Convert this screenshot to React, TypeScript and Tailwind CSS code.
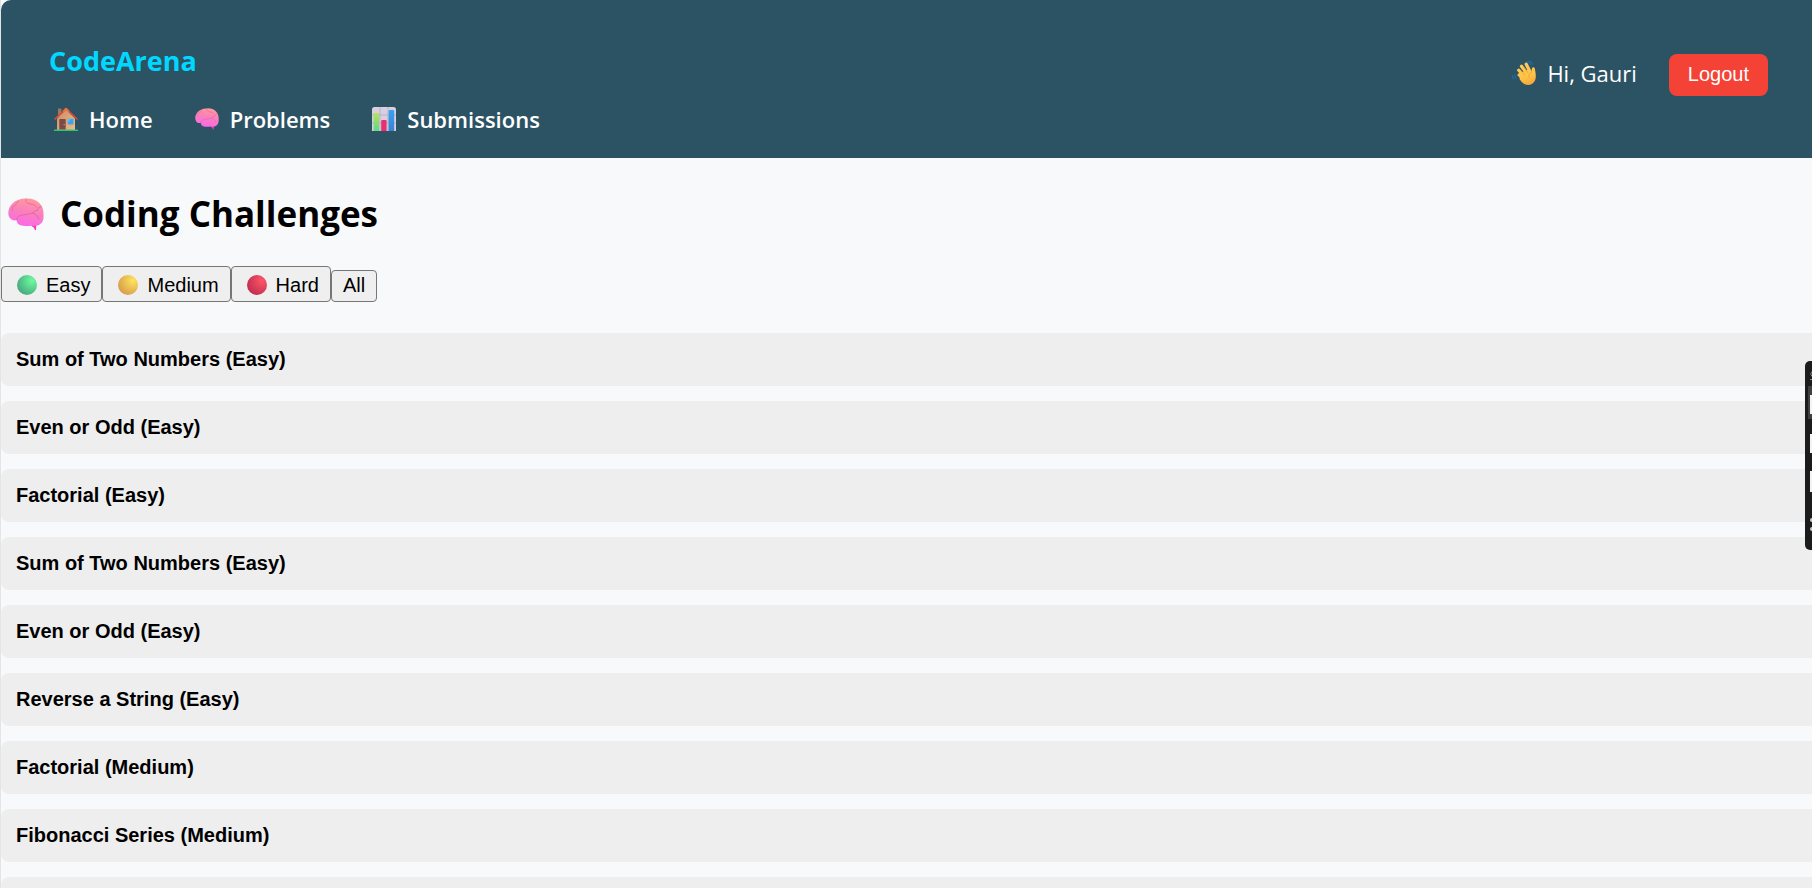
import { useState } from "react";

type Level = "Easy" | "Medium" | "Hard";

const problems: { title: string; level: Level }[] = [
  { title: "Sum of Two Numbers", level: "Easy" },
  { title: "Even or Odd", level: "Easy" },
  { title: "Factorial", level: "Easy" },
  { title: "Sum of Two Numbers", level: "Easy" },
  { title: "Even or Odd", level: "Easy" },
  { title: "Reverse a String", level: "Easy" },
  { title: "Factorial", level: "Medium" },
  { title: "Fibonacci Series", level: "Medium" },
];

function HouseIcon() {
  return (
    <svg viewBox="0 0 24 24" className="size-6 shrink-0" aria-hidden="true">
      <defs>
        <linearGradient id="wall" x1="0" x2="1" y1="0" y2="1">
          <stop offset="0" stopColor="#c98a62" />
          <stop offset="1" stopColor="#efbd8c" />
        </linearGradient>
      </defs>
      <path d="M4 1.6h3.4v8H4z" fill="#a5765c" />
      <path d="M3 11.5 12 2.5l9 9V23H3z" fill="url(#wall)" />
      <path d="M1 12 12 1.6 23 12" fill="none" stroke="#dd4a38" strokeWidth="1.6" strokeLinecap="round" strokeLinejoin="round" />
      <path d="M9.5 4 12 1.6 14.5 4" fill="none" stroke="#f2733c" strokeWidth="1.6" strokeLinecap="round" strokeLinejoin="round" />
      <rect x="5.3" y="12" width="6.4" height="10.8" rx="0.8" fill="#7d4b47" />
      <circle cx="10.2" cy="17.6" r="0.7" fill="#d9a27c" />
      <rect x="13.8" y="11.8" width="5.6" height="5.8" rx="0.6" fill="#3aa4ee" />
      <path d="M13.8 12.4q0-.6.6-.6h2.6l-3.2 4z" fill="#5cc0fa" />
      <path d="M.6 23.2h22.8" stroke="#35c46c" strokeWidth="1.4" strokeLinecap="round" />
    </svg>
  );
}

function BrainIcon({ id, className }: { id: string; className: string }) {
  return (
    <svg viewBox="0 0 36 33" className={className} aria-hidden="true">
      <defs>
        <linearGradient id={id} x1="0.65" x2="0.4" y1="0" y2="1">
          <stop offset="0" stopColor="#ff9a9c" />
          <stop offset="0.5" stopColor="#f97fbd" />
          <stop offset="1" stopColor="#fc68e8" />
        </linearGradient>
      </defs>
      <path d="M24 26.5h4.3l-.2 5.1q-.2 1.2-1.1.4-.8-2.8-3.6-4z" fill="#ea42bb" />
      <path
        d="M17.5.6C23 .1 28.5 1.7 31.5 5.3c3 3.1 4.1 6.5 4 10.6.4 4.5-.3 8.8-3.8 10.7-2.6 1.9-5.7 1.1-8.2 1.1-3.9.6-8.1.6-11.1-.4-2.2-.7-3.6-2.4-3.7-5.2-2.4.8-5.2.2-6.8-2C-.1 17.5.1 14 .9 11.3 2.2 7.4 5.5 3.9 9 2.6 11.7 1.2 14.5.5 17.5.6Z"
        fill={`url(#${id})`}
      />
      <g fill="none" stroke="#e0559f" strokeWidth="1" strokeLinecap="round" opacity="0.6">
        <path d="M8.7 22.1c-.1-2 1.2-3.7 3-4.3 4.4-1.5 8.3-.8 12-2.6 2-.9 3.3-2.7 5.6-2.8" />
        <path d="M10 3.1c-.3 2.3-1.8 3-3.8 4.3-1.6 1.2-2.3 3.1-1.8 5.2M18 1.2c-.8 2.3.8 4.1 3.7 4.4M22 6c3.3 0 5.5 1.2 6.7 3.4M24.4 15.1c3 .5 5.4 2.6 6.3 5.8M33.4 8.7c-2.1.2-3.5 1.5-4 3.7" />
      </g>
    </svg>
  );
}

function ChartIcon() {
  return (
    <svg viewBox="0 0 24 24" className="size-6 shrink-0" aria-hidden="true">
      <defs>
        <linearGradient id="greenBar" x1="0" x2="0" y1="0" y2="1">
          <stop offset="0" stopColor="#b7e352" />
          <stop offset="1" stopColor="#5cdb86" />
        </linearGradient>
        <linearGradient id="blueBar" x1="0" x2="0" y1="0" y2="1">
          <stop offset="0" stopColor="#35a4f2" />
          <stop offset="1" stopColor="#3d7fd3" />
        </linearGradient>
      </defs>
      <path d="M0 2.5Q0 0 2.5 0h19Q24 0 24 2.5V24H0z" fill="#d8d0e0" />
      <path d="M8 0v24M16 0v24M0 8h24M0 16h24" stroke="#b3a9c0" strokeWidth="0.8" />
      <path d="M1.6 24V7q0-1 1-1H6q1 0 1 1v17z" fill="url(#greenBar)" />
      <path d="M9.2 24V14q0-1 1-1h3.4q1 0 1 1v10z" fill="#e8306f" />
      <path d="M16.6 24V4q0-1 1-1h3.6q1 0 1 1v20z" fill="url(#blueBar)" />
    </svg>
  );
}

function WaveIcon() {
  return (
    <svg viewBox="0 0 26 26" className="size-[26px] shrink-0" aria-hidden="true">
      <defs>
        <linearGradient id="hand" gradientUnits="userSpaceOnUse" x1="10" x2="18" y1="4" y2="25">
          <stop offset="0" stopColor="#ffc85c" />
          <stop offset="0.6" stopColor="#ffc446" />
          <stop offset="1" stopColor="#f5a43a" />
        </linearGradient>
      </defs>
      <g fill="none" stroke="#1f72b8" strokeWidth="1" strokeLinecap="round">
        <path d="M15.5 2q3.2-.4 4.4 2.8M18.4 1q2.6.5 3.3 3.2M3.6 15q-.2 2.4 2 3.6M1.2 15.8q0 2.6 2 3.6" />
      </g>
      <g stroke="url(#hand)" strokeWidth="3.3" strokeLinecap="round">
        <path d="m8.2 14.9 4.8 5M7.8 10.3l6 7M10.5 6.2l6 8M15.2 4.3l4.1 8" />
      </g>
      <path d="M10 12.5 18.5 9l2 3.4c.4-1.6-.2-3.5.9-4.6 1-1 2.3-.2 2.5 1.1.6 3.4 1.6 8.1.2 11.3-1.8 4.6-7 6.1-10.8 3.7-2-1.2-3.7-3.3-4.8-5z" fill="url(#hand)" />
      <path d="m10.1 10.6 4 4.7M12.9 7.3l4 5.3M20.5 12.4q-3.5 1-2.6 4.8" fill="none" stroke="#e0963a" strokeWidth="0.6" strokeLinecap="round" />
    </svg>
  );
}

const dotColors: Record<Level, [string, string]> = {
  Easy: ["#6dfb9f", "#46a57d"],
  Medium: ["#ffe45c", "#d59a4b"],
  Hard: ["#ff5566", "#bd2c50"],
};

function LevelDot({ level }: { level: Level }) {
  const [light, dark] = dotColors[level];
  return (
    <svg viewBox="0 0 20 20" className="size-5 shrink-0" aria-hidden="true">
      <defs>
        <radialGradient id={`dot${level}`} cx="0.75" cy="0.28" r="0.85">
          <stop offset="0" stopColor={light} />
          <stop offset="1" stopColor={dark} />
        </radialGradient>
      </defs>
      <circle cx="10" cy="10" r="10" fill={`url(#dot${level})`} />
    </svg>
  );
}

function Header() {
  const link = "flex items-center gap-[11px] text-[22px] leading-8 font-semibold text-white";
  return (
    <header className="flex items-center justify-between rounded-tl-[10px] bg-[#2c5364] pt-[41px] pr-11 pb-[23px] pl-12">
      <div className="flex flex-col gap-[22px]">
        <div className="text-[27px] leading-10 font-bold text-[#00d8ff]">CodeArena</div>
        <nav className="flex gap-[42px] pl-[5px]">
          <a href="#home" className={link}>
            <HouseIcon />
            Home
          </a>
          <a href="#problems" className={link}>
            <BrainIcon id="brainNav" className="h-[22px] w-6 shrink-0" />
            Problems
          </a>
          <a href="#submissions" className={link}>
            <ChartIcon />
            Submissions
          </a>
        </nav>
      </div>
      <div className="flex items-center gap-8 pb-[27px]">
        <div className="flex items-center gap-[10px] pb-1 text-[22px] leading-8 text-white">
          <WaveIcon />
          Hi, Gauri
        </div>
        <button type="button" className="h-[42px] rounded-lg bg-[#f44336] px-[19px] pb-0.5 font-[Liberation_Sans,sans-serif] text-[20px] leading-6 text-white">
          Logout
        </button>
      </div>
    </header>
  );
}

function CaptureToolbar() {
  return (
    <aside className="fixed top-[361px] right-0 h-[189px] w-[7px] overflow-hidden rounded-l-[5px] bg-[#1b1c1e]" aria-label="Capture toolbar">
      <svg viewBox="0 0 7 189" className="h-full w-full" aria-hidden="true">
        <path d="M3 25h4v33H3z" fill="#3f4042" />
        <path d="M5 34h2v19H5zM5 73h2v19H5zM5 110h2v21H5z" fill="#f4f4f4" />
        <path d="M7 10.5 5.7 13 7 15.5M5 18.5h2" stroke="#8b8c8e" fill="none" />
        <circle cx="7" cy="159" r="2" fill="#c9cacb" />
        <circle cx="7" cy="168" r="2" fill="#c9cacb" />
      </svg>
    </aside>
  );
}

export default function App() {
  const [filter, setFilter] = useState<Level | "All">("All");
  const shown = problems.filter((p) => filter === "All" || p.level === filter);
  const filterButton =
    "flex items-center gap-[9px] rounded-[4px] border border-[#767676] bg-[#efefef] text-[20px] leading-6";

  return (
    <div className="h-screen overflow-hidden border-l border-[#e3e4e6] bg-[#f8f9fb] font-[Open_Sans,sans-serif] text-black">
      <Header />
      <main>
        <h1 className="mt-8 flex items-center gap-4 pl-[7px] text-[35px] leading-[48px] font-bold">
          <BrainIcon id="brainTitle" className="h-[33px] w-9 shrink-0" />
          Coding Challenges
        </h1>
        <div className="mt-7 flex items-end font-[Liberation_Sans,sans-serif]">
          {(["Easy", "Medium", "Hard"] as Level[]).map((level) => (
            <button key={level} type="button" onClick={() => setFilter(level)} className={`${filterButton} h-9 pt-0.5 pr-[11px] pl-[15px]`}>
              <LevelDot level={level} />
              {level}
            </button>
          ))}
          <button type="button" onClick={() => setFilter("All")} className={`${filterButton} h-8 px-[11px] pb-0.5`}>
            All
          </button>
        </div>
        <ul className="mt-[31px] flex flex-col gap-[15px] font-[Liberation_Sans,sans-serif]">
          {shown.map((p, i) => (
            <li key={i} className="rounded-l-lg bg-[#eeeeee] px-[15px] py-[14px] text-[20px] leading-[25px] font-bold">
              {p.title} ({p.level})
            </li>
          ))}
          <li className="h-[53px] rounded-l-lg bg-[#eeeeee]" aria-hidden="true" />
        </ul>
      </main>
      <CaptureToolbar />
    </div>
  );
}
